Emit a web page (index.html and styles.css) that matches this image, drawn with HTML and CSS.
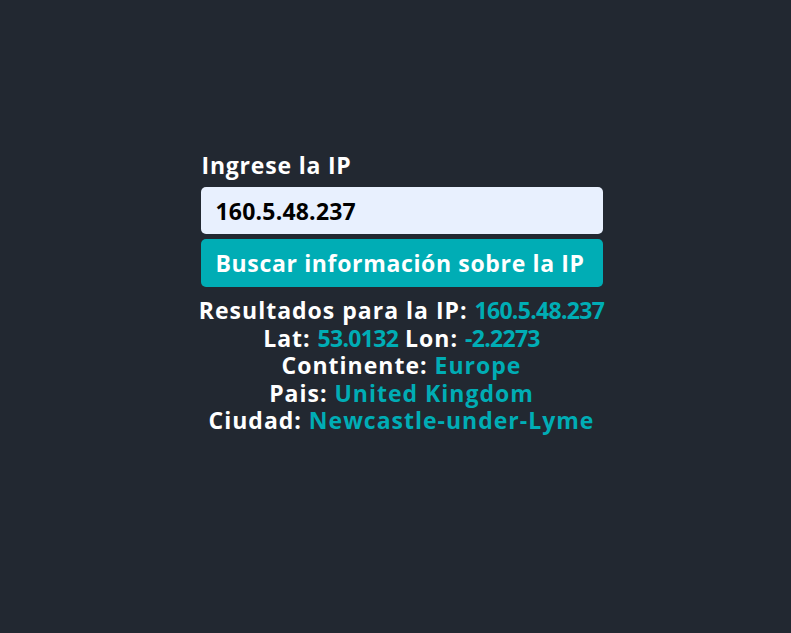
FILE: index.html
```html
<!DOCTYPE html>
<html lang="es">
<head>
<meta charset="utf-8">
<title>IP</title>
<link rel="stylesheet" href="styles.css">
</head>
<body>
<main class="page">
  <form class="search">
    <label class="search-label" for="ip">Ingrese la IP</label>
    <input class="search-input" id="ip" type="text" value="160.5.48.237">
    <button class="search-button" type="button">Buscar información sobre la IP</button>
  </form>
  <section class="results">
    <p>Resultados para la IP: <span class="hl num">160.5.48.237</span></p>
    <p>Lat: <span class="hl num">53.0132</span> Lon: <span class="hl num">-2.2273</span></p>
    <p>Continente: <span class="hl">Europe</span></p>
    <p>Pais: <span class="hl">United Kingdom</span></p>
    <p>Ciudad: <span class="hl">Newcastle-under-Lyme</span></p>
  </section>
</main>
</body>
</html>
```
FILE: styles.css
```css
html, body {
  margin: 0;
  padding: 0;
  background: #222831;
  height: 100%;
}
body {
  font-family: "Open Sans", sans-serif;
  font-weight: 700;
  font-size: 23px;
  color: #ffffff;
}
.page {
  display: flex;
  flex-direction: column;
  align-items: center;
  padding-top: 151px;
  padding-left: 12px;
}
.search {
  display: flex;
  flex-direction: column;
  width: 402px;
}
.search-label {
  line-height: 28px;
  margin-bottom: 8px;
  padding-left: 1px;
  letter-spacing: 0.8px;
}
.search-input {
  box-sizing: border-box;
  height: 47px;
  border: none;
  border-radius: 5px;
  background: #e8f0fe;
  padding: 0 15px;
  font: inherit;
  letter-spacing: 0.2px;
  color: #000;
  outline: none;
}
.search-button {
  box-sizing: border-box;
  height: 48px;
  margin-top: 5px;
  border: none;
  border-radius: 5px;
  background: #00adb5;
  color: #fff;
  font: inherit;
  letter-spacing: 0.65px;
  text-align: left;
  padding: 0 15px;
}
.results {
  margin-top: 10px;
  text-align: center;
  letter-spacing: 1px;
}
.results p {
  margin: 0;
  line-height: 27.5px;
}
.hl {
  color: #00adb5;
}
.num {
  letter-spacing: -0.7px;
}
```
